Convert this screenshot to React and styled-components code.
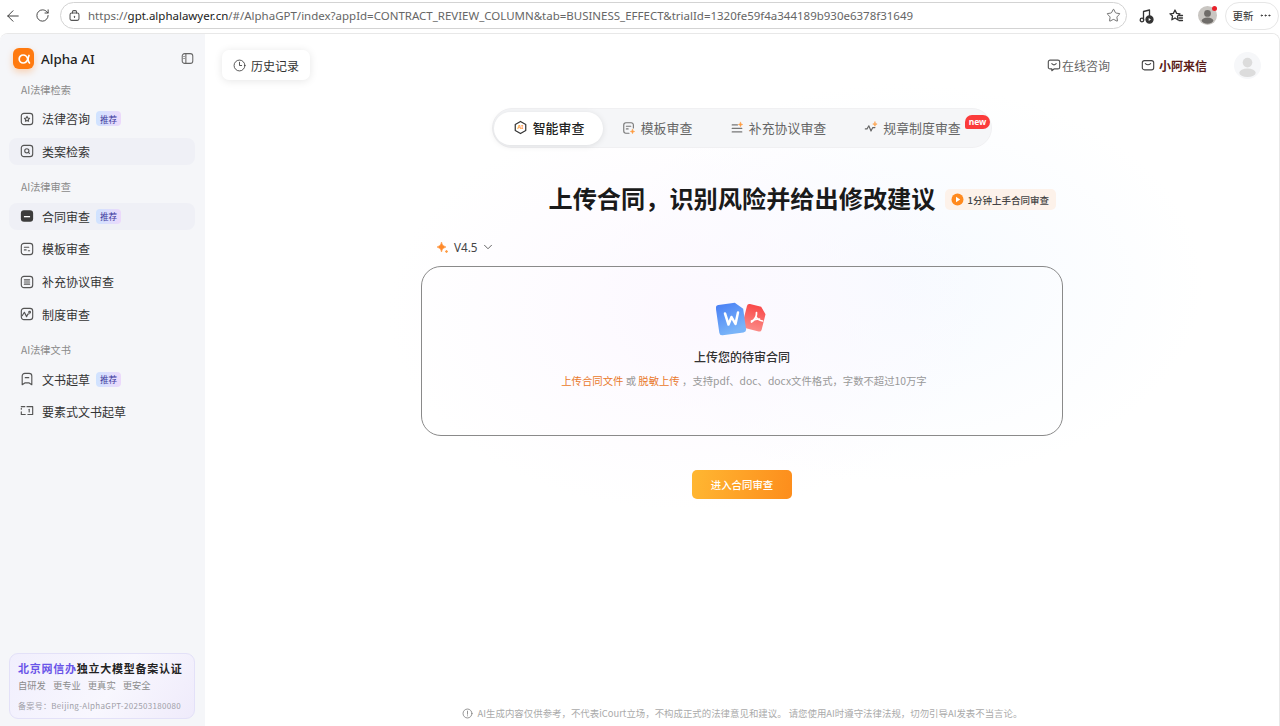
import React from "react";
import styled, { createGlobalStyle } from "styled-components";
import { ArrowLeft, RotateCw, Star, ChevronDown, Clock3, Ellipsis } from "lucide-react";

const GlobalStyle = createGlobalStyle`
  html, body { margin: 0; padding: 0; height: 100%; overflow: hidden; background: #fff; }
  #root { height: 100%; }
  * { box-sizing: border-box; }
  body { font-family: "Noto Sans CJK SC", "Noto Sans", sans-serif; color: #222; }
`;

const Page = styled.div`
  width: 1280px;
  height: 726px;
  display: flex;
  flex-direction: column;
  background: #fff;
`;

/* browser chrome */
const BrowserBar = styled.div`
  height: 33px;
  flex: none;
  display: flex;
  align-items: center;
  padding: 0 2px 2px 4px;
  color: #3c3c3c;
`;
const NavButton = styled.span`
  width: ${(p) => p.$w}px;
  flex: none;
  display: flex;
  margin-right: ${(p) => p.$gap}px;
`;
const UrlBar = styled.div`
  width: 1067px;
  flex: none;
  height: 27px;
  border: 1px solid #d3d3d3;
  border-radius: 14px;
  display: flex;
  align-items: center;
  padding: 0 5px 0 7px;
  gap: 7px;
`;
const Url = styled.div`
  flex: 1;
  font-family: "Noto Sans", sans-serif;
  font-size: 11.49px;
  color: #222;
  white-space: nowrap;
  overflow: hidden;
  em { font-style: normal; color: #666; }
`;
const ToolIcons = styled.div`
  display: flex;
  align-items: center;
  gap: 14px;
  margin-left: 11px;
`;
const BrowserAvatar = styled.span`
  position: relative;
  display: flex;
  &::after {
    content: "";
    position: absolute;
    top: 0;
    right: 0;
    width: 5px;
    height: 5px;
    border-radius: 50%;
    background: #e8212b;
  }
`;
const UpdatePill = styled.div`
  width: 54px;
  height: 28px;
  margin-left: 8px;
  flex: none;
  border: 1px solid #e6e6e6;
  border-radius: 14px;
  display: flex;
  align-items: center;
  justify-content: center;
  gap: 5px;
  font-size: 10.5px;
  color: #333;
`;

const Body = styled.div`
  flex: 1;
  display: flex;
  min-height: 0;
  border-top: 1px solid #e8e8e8;
  border-right: 1px solid #e8e8e8;
  border-top-right-radius: 8px;
  border-top-left-radius: 8px;
  overflow: hidden;
`;

/* sidebar */
const Sidebar = styled.aside`
  width: 205px;
  flex: none;
  background: #f5f6f9;
  display: flex;
  flex-direction: column;
  padding: 13px 10px 7px 9px;
`;
const Brand = styled.div`
  height: 23px;
  display: flex;
  align-items: center;
  padding-left: 4px;
  font-family: "Noto Sans", sans-serif;
  font-size: 13.4px;
  font-weight: 500;
  color: #222;
`;
const BrandMark = styled.span`
  width: 21px;
  height: 21px;
  border-radius: 6px;
  background: #ff7a0f;
  box-shadow: 0 3px 7px rgba(255, 122, 15, 0.3);
  display: flex;
  align-items: center;
  justify-content: center;
  margin-right: 7px;
`;
const Collapse = styled.span`
  margin-left: auto;
  margin-right: 1px;
  display: flex;
`;
const SectionLabel = styled.div`
  font-size: 10.2px;
  line-height: 14px;
  color: #8a8a8a;
  padding-left: 12px;
  margin: ${(p) => p.$top}px 0 ${(p) => p.$bottom ?? 9}px;
`;
const NavItem = styled.div`
  height: 27px;
  margin-bottom: ${(p) => p.$after ?? 5.7}px;
  border-radius: 8px;
  background: ${(p) => (p.$active ? "#eff0f6" : "transparent")};
  display: flex;
  align-items: center;
  padding-left: 11px;
  gap: 8px;
  font-size: 12px;
  color: #333;
`;
const Tag = styled.span`
  height: 15px;
  width: 25px;
  border-radius: 4px;
  background: linear-gradient(90deg, #cfe3ff, #ecd9fb);
  color: #3f3a9e;
  font-size: 8.6px;
  display: flex;
  align-items: center;
  justify-content: center;
  margin-left: -2px;
`;
const CertCard = styled.div`
  margin-top: auto;
  height: 66px;
  border: 1px solid #e3e1f8;
  border-radius: 9px;
  background: linear-gradient(125deg, #f1effd 0%, #f8f7fe 55%, #efebfb 100%);
  padding: 7px 0 0 8px;
`;
const CertTitle = styled.div`
  font-size: 11px;
  letter-spacing: 0.75px;
  line-height: 15px;
  font-weight: 700;
  color: #222;
  white-space: nowrap;
  span { color: #6a55e8; }
`;
const CertPoints = styled.div`
  display: flex;
  gap: 7px;
  font-size: 9.3px;
  line-height: 13px;
  margin-top: 3px;
  color: #8c8c8c;
`;
const CertNo = styled.div`
  font-size: 8px;
  letter-spacing: 0.32px;
  line-height: 12px;
  margin-top: 8px;
  color: #a0a0a8;
  white-space: nowrap;
`;

/* main */
const Main = styled.main`
  flex: 1;
  min-width: 0;
  display: flex;
  flex-direction: column;
  align-items: center;
  padding: 16px 0 6px;
  background:
    radial-gradient(ellipse 300px 200px at 45% 40%, #fcf8ff 0%, rgba(255, 255, 255, 0) 100%),
    radial-gradient(ellipse 300px 200px at 65% 36%, #f6faff 0%, rgba(255, 255, 255, 0) 100%),
    #fff;
`;
const TopRow = styled.div`
  align-self: stretch;
  height: 30px;
  display: flex;
  align-items: center;
  padding: 0 18px 0 17px;
`;
const HistoryButton = styled.button`
  width: 88px;
  height: 30px;
  border: 0;
  border-radius: 7px;
  background: #fff;
  box-shadow: 0 1px 8px rgba(0, 0, 0, 0.1);
  display: flex;
  align-items: center;
  justify-content: center;
  gap: 5px;
  padding: 0;
  font: inherit;
  font-size: 12px;
  color: #333;
`;
const TopLink = styled.div`
  display: flex;
  align-items: center;
  gap: ${(p) => p.$gap}px;
  margin: ${(p) => p.$margin};
  font-size: 12px;
  font-weight: ${(p) => (p.$strong ? 700 : 400)};
  color: ${(p) => (p.$strong ? "#5b1c18" : "#666")};
`;
const UserAvatar = styled.div`
  width: 27px;
  height: 27px;
  margin-left: 26px;
  display: flex;
`;
const TabBar = styled.div`
  position: relative;
  margin-top: 28px;
  width: 500px;
  height: 40px;
  border-radius: 20px;
  background: #f5f6f8;
  border: 1px solid #f0f0f2;
  display: flex;
  align-items: center;
  padding-left: 1px;
`;
const Tab = styled.div`
  height: 33px;
  width: ${(p) => p.$w}px;
  border-radius: 17px;
  display: flex;
  align-items: center;
  justify-content: center;
  gap: 5px;
  padding-bottom: 1px;
  font-size: 12.9px;
  color: ${(p) => (p.$active ? "#222" : "#666")};
  font-weight: ${(p) => (p.$active ? 500 : 400)};
  background: ${(p) => (p.$active ? "#fff" : "transparent")};
  box-shadow: ${(p) => (p.$active ? "0 1px 6px rgba(0,0,0,0.1)" : "none")};
`;
const NewBadge = styled.span`
  position: absolute;
  top: 6px;
  right: 1px;
  width: 25px;
  height: 14px;
  border-radius: 7px 7px 7px 2px;
  background: #fb3b3b;
  color: #fff;
  font-family: "Noto Sans", sans-serif;
  font-size: 8.5px;
  font-weight: 700;
  line-height: 13px;
  text-align: center;
`;
const HeadingRow = styled.div`
  position: relative;
  margin-top: 31px;
  height: 38px;
`;
const Heading = styled.h1`
  margin: 0;
  font-size: 24.2px;
  line-height: 38px;
  font-weight: 700;
  color: #1a1a1a;
  white-space: nowrap;
`;
const GuideBadge = styled.div`
  position: absolute;
  left: calc(100% + 9px);
  top: 10px;
  width: 111px;
  height: 21px;
  border-radius: 5px;
  background: #fdf2ea;
  display: flex;
  align-items: center;
  padding-left: 6px;
  gap: 4px;
  font-size: 9.5px;
  font-weight: 500;
  color: #444;
  white-space: nowrap;
`;
const Version = styled.div`
  width: 642px;
  margin-top: 20px;
  height: 20px;
  display: flex;
  align-items: center;
  padding-left: 15px;
  gap: 5px;
  font-family: "Noto Sans", sans-serif;
  font-size: 11.7px;
  color: #444;
`;
const VersionCaret = styled.span`
  display: flex;
  margin-left: -2px;
`;
const UploadBox = styled.div`
  margin-top: 9px;
  width: 642px;
  height: 170px;
  border: 1px solid #8a8a8a;
  border-radius: 20px;
  display: flex;
  flex-direction: column;
  align-items: center;
  padding-top: 34px;
`;
const UploadTitle = styled.div`
  margin-top: 11px;
  font-size: 12px;
  line-height: 18px;
  font-weight: 500;
  color: #333;
`;
const UploadHint = styled.div`
  margin-top: 8px;
  padding-left: 4px;
  font-size: 10.35px;
  line-height: 14px;
  color: #999;
  white-space: pre;
  b { font-weight: 400; color: #e9792b; }
`;
const EnterButton = styled.button`
  margin-top: 34px;
  width: 100px;
  height: 29px;
  border: 0;
  border-radius: 5px;
  background: linear-gradient(100deg, #ffb732, #fd8d1c);
  color: #fff;
  padding: 0;
  font: inherit;
  font-size: 10.4px;
  font-weight: 500;
`;
const Disclaimer = styled.div`
  margin-top: auto;
  display: flex;
  align-items: center;
  gap: 5px;
  font-size: 9.43px;
  line-height: 14px;
  color: #aaa;
  white-space: nowrap;
`;

/* icons drawn from the picture */
const Line = ({ size = 14, color = "currentColor", sw = 1.3, children, box = 16 }) => (
  <svg width={size} height={size} viewBox={`0 0 ${box} ${box}`} fill="none" stroke={color} strokeWidth={sw} strokeLinecap="round" strokeLinejoin="round">
    {children}
  </svg>
);

const NavFrame = ({ children }) => (
  <Line color="#555">
    <rect x="1.500" y="1.500" width="13" height="13" rx="3" />
    {children}
  </Line>
);
const StarIcon = () => <NavFrame><path d="M8 5l.9 1.900 2 .3-1.400 1.400.3 2L8 9.700l-1.800.9.3-2L5.100 7.200l2-.3z" /></NavFrame>;
const SearchIcon = () => <NavFrame><circle cx="7.800" cy="7.800" r="2.400" /><path d="M9.600 9.600l1.200 1.200" /></NavFrame>;
const ContractIcon = () => (
  <svg width="14" height="14" viewBox="0 0 16 16">
    <rect x="1" y="1.500" width="14" height="13" rx="3.500" fill="#3c3c3c" />
    <rect x="4.500" y="8" width="7" height="1.500" fill="#fff" />
  </svg>
);
const TemplateIcon = () => <NavFrame><path d="M5 6h5M5 9h2M9.500 10h1.500" /></NavFrame>;
const ListIcon = () => <NavFrame><path d="M5 5.500h6M5 8h6M5 10.500h6" /></NavFrame>;
const PulseIcon = () => <NavFrame><path d="M2.500 10l2.500-4 2.500 5 1.500-3h1" /><circle cx="11" cy="6" r="1" /></NavFrame>;
const DraftIcon = () => (
  <Line color="#555">
    <path d="M2.500 4.500A3 3 0 0 1 5.500 1.500h5a3 3 0 0 1 3 3V14.500l-3-2h-5l-3 2z" />
    <path d="M6 6.500h4" />
  </Line>
);
const ElementIcon = () => (
  <Line color="#555">
    <path d="M1.500 3h4M8 3h6.500v9H9M6 12H1.500V9M1.500 6V5" />
    <path d="M10.500 6v3" />
  </Line>
);
const ChatIcon = () => (
  <Line color="#555">
    <path d="M3.500 2.500h9a2 2 0 0 1 2 2v6a2 2 0 0 1-2 2H8L5.500 14.500V12.500h-2a2 2 0 0 1-2-2v-6a2 2 0 0 1 2-2z" />
    <path d="M5.500 6.500c1.500 1.500 3.500 1.500 5 0" />
  </Line>
);
const MailIcon = () => (
  <Line color="#444">
    <rect x="1.500" y="3" width="13" height="10.500" rx="2.500" />
    <path d="M5 6.500c1.800 1.500 4.200 1.500 6 0" />
  </Line>
);
const AvatarIcon = ({ size, bg, fg }) => (
  <svg width={size} height={size} viewBox="0 0 28 28">
    <circle cx="14" cy="14" r="14" fill={bg} />
    <circle cx="14" cy="11" r="5" fill={fg} />
    <ellipse cx="14" cy="21.500" rx="8.500" ry="4.500" fill={fg} />
  </svg>
);
const Spark = ({ x, y, r = 2 }) => (
  <path d={`M${x} ${y - r}Q${x} ${y} ${x + r} ${y}Q${x} ${y} ${x} ${y + r}Q${x} ${y} ${x - r} ${y}Q${x} ${y} ${x} ${y - r}z`} fill="#ff9a3c" stroke="#ff9a3c" strokeWidth=".6" />
);

const App = () => (
  <>
    <GlobalStyle />
    <Page>
      <BrowserBar>
        <NavButton $w={18} $gap={13}><ArrowLeft size={18} strokeWidth={1.3} /></NavButton>
        <NavButton $w={15} $gap={10}><RotateCw size={15} strokeWidth={1.5} /></NavButton>
        <UrlBar>
          <Line size={13} color="#555">
            <rect x="2.500" y="5" width="11" height="9" rx="2" />
            <path d="M5.500 5V3.500a1.500 1.500 0 0 1 1.500-1.500h2a1.500 1.500 0 0 1 1.500 1.500V5" />
            <path d="M8 9v1.500" />
          </Line>
          <Url><em>https://</em>gpt.alphalawyer.cn<em>/#/AlphaGPT/index?appId=CONTRACT_REVIEW_COLUMN&amp;tab=BUSINESS_EFFECT&amp;trialId=1320fe59f4a344189b930e6378f31649</em></Url>
          <Star size={15} strokeWidth={1.2} color="#444" />
        </UrlBar>
        <ToolIcons>
          <Line size={16} color="#333">
            <path d="M5.500 12V3.500l6-1.500v6" />
            <circle cx="4" cy="12" r="1.800" />
            <circle cx="11.500" cy="11.500" r="3.500" fill="#333" />
            <path d="M10.700 10v3l2.200-1.500z" fill="#fff" stroke="none" />
          </Line>
          <Line size={16} color="#333">
            <path d="M7 2l1.600 3.400 3.400.4-2.500 2.500.6 3.700L7 10l-3.100 1.800.6-3.700L2 5.800l3.400-.4z" />
            <path d="M11.500 7.500h3M11 10h3.500M11 12.500h3.500" />
          </Line>
          <BrowserAvatar><AvatarIcon size={19} bg="#c9c6c2" fg="#6f6c69" /></BrowserAvatar>
        </ToolIcons>
        <UpdatePill>更新<Ellipsis size={13} strokeWidth={1.8} /></UpdatePill>
      </BrowserBar>
      <Body>
        <Sidebar>
          <Brand>
            <BrandMark>
              <svg width="14" height="14" viewBox="0 0 14 14" fill="none" stroke="#fff" strokeWidth="1.700" strokeLinecap="round">
                <path d="M12 3.500C10.500 7 10.500 9 12.500 11" />
                <path d="M10.800 7C10 9.500 8.500 11 6.200 11A4 4 0 1 1 6.200 3c2.300 0 3.800 1.500 4.600 4z" />
              </svg>
            </BrandMark>
            Alpha AI
            <Collapse>
              <Line size={13} color="#666">
                <rect x="1.500" y="2" width="13" height="12" rx="3" />
                <path d="M6 2v12M3.500 5.500h.5M3.500 8h.5" />
              </Line>
            </Collapse>
          </Brand>
          <SectionLabel $top={13} $bottom={8}>AI法律检索</SectionLabel>
          <NavItem><StarIcon />法律咨询<Tag>推荐</Tag></NavItem>
          <NavItem $active $after={0}><SearchIcon />类案检索</NavItem>
          <SectionLabel $top={15}>AI法律审查</SectionLabel>
          <NavItem $active><ContractIcon />合同审查<Tag>推荐</Tag></NavItem>
          <NavItem><TemplateIcon />模板审查</NavItem>
          <NavItem><ListIcon />补充协议审查</NavItem>
          <NavItem $after={0}><PulseIcon />制度审查</NavItem>
          <SectionLabel $top={15}>AI法律文书</SectionLabel>
          <NavItem $after={5}><DraftIcon />文书起草<Tag>推荐</Tag></NavItem>
          <NavItem><ElementIcon />要素式文书起草</NavItem>
          <CertCard>
            <CertTitle><span>北京网信办</span>独立大模型备案认证</CertTitle>
            <CertPoints><span>自研发</span><span>更专业</span><span>更真实</span><span>更安全</span></CertPoints>
            <CertNo>备案号：Beijing-AlphaGPT-202503180080</CertNo>
          </CertCard>
        </Sidebar>
        <Main>
          <TopRow>
            <HistoryButton><Clock3 size={13} strokeWidth={1.5} />历史记录</HistoryButton>
            <TopLink $gap={1} $margin="0 0 0 auto"><ChatIcon />在线咨询</TopLink>
            <TopLink $gap={4} $margin="0 1px 0 31px" $strong><MailIcon />小阿来信</TopLink>
            <UserAvatar><AvatarIcon size={27} bg="#f6f7f9" fg="#dcdcdc" /></UserAvatar>
          </TopRow>
          <TabBar>
            <Tab $active $w={109}>
              <svg width="15" height="15" viewBox="0 0 16 16" fill="none" stroke="#333" strokeWidth="1.300" strokeLinejoin="round">
                <path d="M8 1.500l5.600 3.200v6.600L8 14.500l-5.600-3.200V4.700z" />
                <text x="8" y="10" textAnchor="middle" fontSize="6" fontWeight="700" fill="#ff9a3c" stroke="none" fontFamily="Noto Sans, sans-serif">AI</text>
              </svg>
              智能审查
            </Tab>
            <Tab $w={108}>
              <Line size={14} color="#777">
                <path d="M13 8V4.500A2.500 2.500 0 0 0 10.500 2h-6A2.500 2.500 0 0 0 2 4.500v7A2.500 2.500 0 0 0 4.500 14H8" />
                <path d="M5 6h5M5 9h2" />
                <Spark x={12} y={12} r={2.500} />
              </Line>
              模板审查
            </Tab>
            <Tab $w={134}>
              <Line size={14} color="#777">
                <path d="M2.500 4.500h6M2.500 8.500h11M2.500 12.500h11" />
                <Spark x={12} y={4} r={2.500} />
              </Line>
              补充协议审查
            </Tab>
            <Tab $w={135}>
              <Line size={14} color="#666">
                <path d="M1.500 9h2l2-3.500 2.500 6 2-4h2.500" />
                <Spark x={12.500} y={3.500} r={2.500} />
              </Line>
              规章制度审查
            </Tab>
            <NewBadge>new</NewBadge>
          </TabBar>
          <HeadingRow>
            <Heading>上传合同，识别风险并给出修改建议</Heading>
            <GuideBadge>
              <svg width="13" height="13" viewBox="0 0 13 13">
                <circle cx="6.500" cy="6.500" r="6" fill="#ff8a1f" />
                <path d="M5 3.800v5.400l4.200-2.700z" fill="#fff" />
              </svg>
              1分钟上手合同审查
            </GuideBadge>
          </HeadingRow>
          <Version>
            <svg width="13" height="13" viewBox="0 0 13 13">
              <path d="M5.500 1Q5.800 5 10 6Q5.800 7 5.500 11Q5.200 7 1 6Q5.200 5 5.500 1z" fill="#ff8a2b" stroke="#ff8a2b" strokeWidth=".5" />
              <Spark x={10.500} y={10.500} r={1.500} />
            </svg>
            V4.5
            <VersionCaret><ChevronDown size={14} strokeWidth={1.4} /></VersionCaret>
          </Version>
          <UploadBox>
            <svg width="52" height="36" viewBox="0 0 52 36">
              <defs>
                <linearGradient id="wordFill" x1="0" y1="0" x2="0.300" y2="1">
                  <stop offset="0" stopColor="#4a80f5" />
                  <stop offset="1" stopColor="#79b4f8" />
                </linearGradient>
                <linearGradient id="pdfFill" x1="0" y1="0" x2="0" y2="1">
                  <stop offset="0" stopColor="#f94a4a" />
                  <stop offset="1" stopColor="#fb8a86" />
                </linearGradient>
              </defs>
              <g transform="rotate(14 38 18)">
                <path d="M28 7a2.500 2.500 0 0 1 2.500-2.500H42l6 6v16a2.500 2.500 0 0 1-2.500 2.500h-15a2.500 2.500 0 0 1-2.500-2.500z" fill="url(#pdfFill)" />
              </g>
              <path d="M40.500 11.500c.3 3.500-1.500 7-5 9.500M40 15.500c1 2.500 3.500 4 6.500 4.500M35.500 20c3-1.500 6-2 8-2" stroke="#fff" strokeWidth="1.700" fill="none" strokeLinecap="round" />
              <g transform="rotate(-8 15 18)">
                <path d="M1.500 5.500A3 3 0 0 1 4.500 2.500H21l7.500 7V30a3 3 0 0 1-3 3H4.500a3 3 0 0 1-3-3z" fill="url(#wordFill)" />
              </g>
              <path d="M9 12.500l3.500 11 3-7.500 4 7 2.500-11.500" stroke="#fff" strokeWidth="2.500" fill="none" strokeLinecap="round" strokeLinejoin="round" />
            </svg>
            <UploadTitle>上传您的待审合同</UploadTitle>
            <UploadHint><b>上传合同文件</b> 或 <b>脱敏上传</b> ，支持pdf、doc、docx文件格式，字数不超过10万字</UploadHint>
          </UploadBox>
          <EnterButton>进入合同审查</EnterButton>
          <Disclaimer>
            <Line size={11} color="#888">
              <circle cx="8" cy="8" r="6.500" />
              <path d="M8 4.500v4.500M8 11.300v.2" />
            </Line>
            AI生成内容仅供参考，不代表iCourt立场，不构成正式的法律意见和建议。 请您使用AI时遵守法律法规，切勿引导AI发表不当言论。
          </Disclaimer>
        </Main>
      </Body>
    </Page>
  </>
);

export default App;
